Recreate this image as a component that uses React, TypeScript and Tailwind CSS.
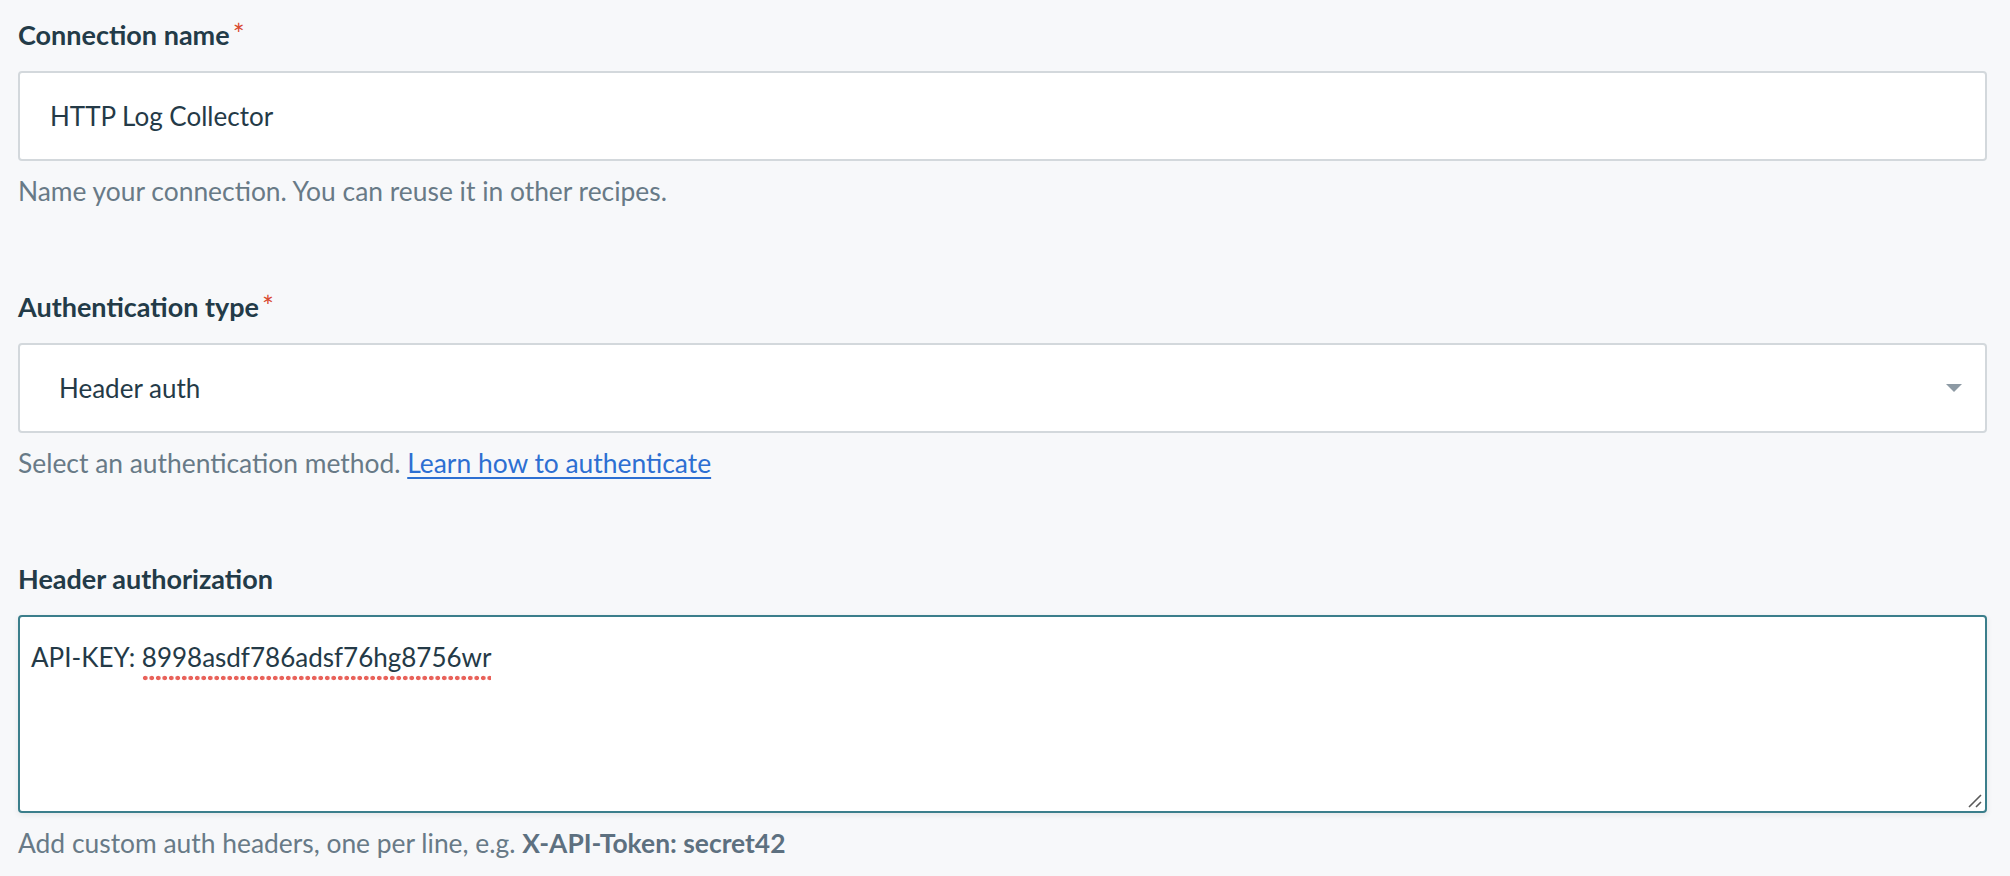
import { ReactNode } from "react";

const font = { fontFamily: "Lato, 'Open Sans', sans-serif" };

function Label({ children, required }: { children: ReactNode; required?: boolean }) {
  return (
    <div className="mb-[18px] flex h-[36px] items-center text-[27px] font-bold leading-[36px] text-[#233b48]">
      {children}
      {required && (
        <span className="relative -top-[1px] ml-[3px] text-[28px] leading-none font-normal text-[#d9492f]">*</span>
      )}
    </div>
  );
}

function Help({ children }: { children: ReactNode }) {
  return <p className="mt-[12px] h-[36px] text-[26.4px] leading-[36px] text-[#687a87]">{children}</p>;
}

export default function App() {
  return (
    <main style={font} className="min-h-screen w-full bg-[#f7f8fa] pt-[17px] pr-[23px] pl-[18px]">
      {/* CONNECTION NAME */}
      <section>
        <Label required>Connection name</Label>
        <div className="flex h-[90px] items-center rounded-[4px] border-2 border-[#d3d8dc] bg-white pl-[30px] text-[26px] text-[#243a47]">
          HTTP Log Collector
        </div>
        <Help>Name your connection. You can reuse it in other recipes.</Help>
      </section>

      {/* AUTH TYPE */}
      <section className="mt-[80px]">
        <Label required>Authentication type</Label>
        <div className="flex h-[90px] items-center justify-between rounded-[4px] border-2 border-[#d3d8dc] bg-white pr-[23px] pl-[39px] text-[26px] text-[#243a47]">
          <span>Header auth</span>
          <svg width="16" height="8" viewBox="0 0 16 8">
            <path d="M0 0 H16 L8 8 Z" fill="#8d9aa4" />
          </svg>
        </div>
        <Help>
          Select an authentication method.{" "}
          <a href="#" className="text-[#2d6fd2] underline underline-offset-[4px]">
            Learn how to authenticate
          </a>
        </Help>
      </section>

      {/* HEADER AUTHORIZATION */}
      <section className="mt-[80px]">
        <Label>Header authorization</Label>
        <div className="relative h-[198px] rounded-[4px] border-2 border-[#3b7e8b] bg-white pt-[22px] pl-[11px] text-[26px] leading-[36px] text-[#243a47] shadow-[0_2px_6px_rgba(0,0,0,0.08)]">
          API-KEY:{" "}
          <span className="bg-[radial-gradient(circle,#e8625a_2px,transparent_2.6px)] bg-[length:6.5px_6px] bg-[position:0_100%] bg-repeat-x pb-[8px]">
            8998asdf786adsf76hg8756wr
          </span>
          <svg className="absolute right-[2px] bottom-[2px]" width="16" height="16" viewBox="0 0 16 16">
            <path d="M2 14 L14 2 M9 14 L14 9" stroke="#5a5a5a" strokeWidth="1.6" />
          </svg>
        </div>
        <Help>
          Add custom auth headers, one per line, e.g. <b className="font-bold text-[#5d7080]">X-API-Token: secret42</b>
        </Help>
      </section>
    </main>
  );
}
